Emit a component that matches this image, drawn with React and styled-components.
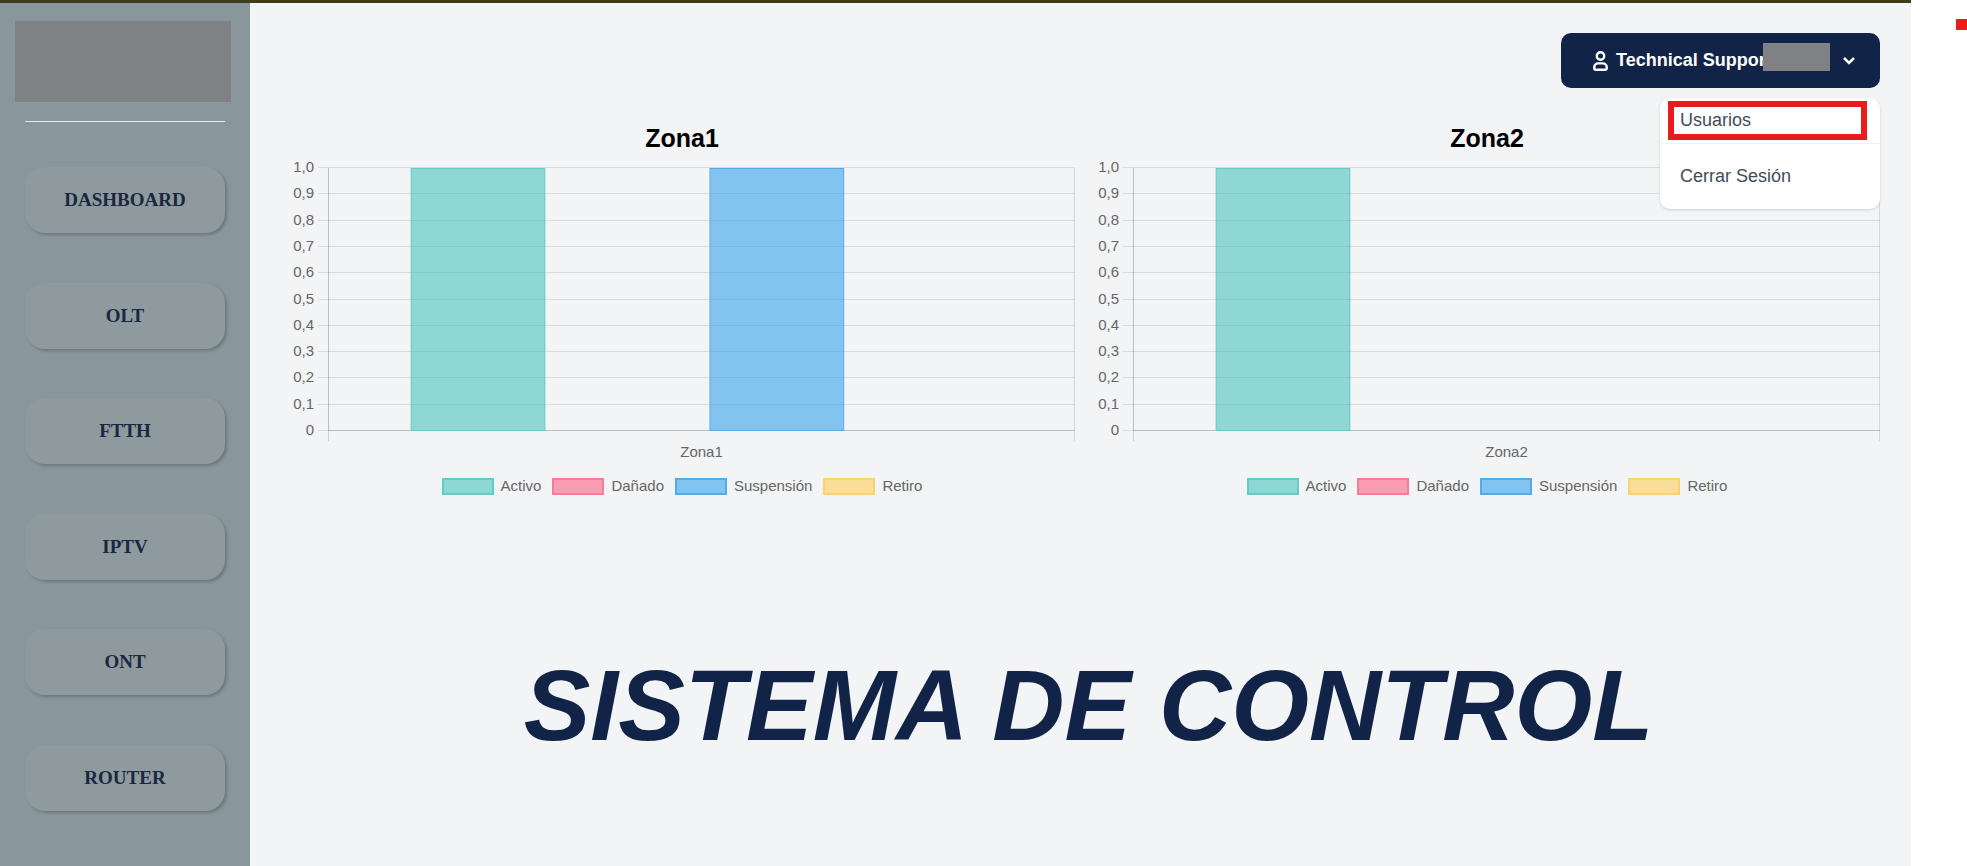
import React from "react";
import styled, { createGlobalStyle } from "styled-components";

const GlobalStyle = createGlobalStyle`
  *, *::before, *::after { box-sizing: border-box; }
  body {
    margin: 0;
    background: #ffffff;
    font-family: "Liberation Sans", Arial, Helvetica, sans-serif;
  }
`;

const Page = styled.div`
  display: grid;
  grid-template-columns: minmax(0, 1fr) 56px;
  min-height: 100vh;
`;

const Shell = styled.div`
  display: grid;
  grid-template-columns: 250px minmax(0, 1fr);
  border-top: 3px solid #423c1f;
  background: #f3f4f6;
`;

const Gutter = styled.aside`
  display: flex;
  justify-content: flex-end;
  align-items: flex-start;
  padding-top: 19px;
`;

const Marker = styled.span`
  width: 11px;
  height: 11px;
  background: #e81c1c;
`;

const Sidebar = styled.aside`
  display: flex;
  flex-direction: column;
  background: #89969b;
  padding: 18px 25px 55px;
`;

const LogoBlock = styled.div`
  height: 81px;
  margin: 0 -6px 0 -10px;
  background: #808184;
`;

const Divider = styled.hr`
  width: 100%;
  height: 1px;
  margin: 19px 0 45px;
  border: 0;
  background: #e5e7eb;
`;

const Menu = styled.nav`
  display: flex;
  flex: 1;
  flex-direction: column;
  justify-content: space-between;
  gap: 16px;
`;

const MenuLink = styled.a`
  display: flex;
  align-items: center;
  justify-content: center;
  height: 66px;
  border-radius: 20px;
  background: #8f9a9e;
  box-shadow: 2px 2px 3px rgba(0, 0, 0, 0.2);
  color: #1a2740;
  font: bold 19px/24px "Liberation Serif", "Times New Roman", serif;
  text-decoration: none;
`;

const Main = styled.main`
  display: flex;
  flex-direction: column;
  padding: 30px 31px 60px 39px;
`;

const Header = styled.header`
  display: flex;
  justify-content: flex-end;
`;

const UserMenu = styled.div`
  position: relative;
`;

const UserButton = styled.button`
  display: flex;
  align-items: center;
  width: 319px;
  height: 55px;
  padding: 0 25px 0 32px;
  border: 0;
  border-radius: 10px;
  background: #112347;
  color: #ffffff;
  font: bold 18px/24px "Liberation Sans", Arial, sans-serif;
`;

const UserName = styled.span`
  position: relative;
  flex: 1;
  margin: 0 13px 0 8px;
  padding-bottom: 2px;
  text-align: left;
`;

const NameMask = styled.span`
  position: absolute;
  top: -5px;
  right: 0;
  width: 67px;
  height: 28px;
  background: #808184;
`;

const Dropdown = styled.div`
  position: absolute;
  z-index: 1;
  top: 65px;
  right: 0;
  width: 220px;
  border-radius: 10px;
  background: #ffffff;
  box-shadow: 0 1px 3px rgba(0, 0, 0, 0.15);
`;

const DropdownItem = styled.a`
  display: flex;
  align-items: center;
  height: ${({ $tall }) => ($tall ? "66px" : "45px")};
  padding: 0 20px 2px;
  border-top: ${({ $tall }) => ($tall ? "1px solid #f0f1f3" : "0")};
  color: #414b5c;
  font-size: 18px;
  line-height: 24px;
  text-decoration: none;
`;

const Highlight = styled.span`
  position: absolute;
  top: 3px;
  left: 8px;
  right: 13px;
  height: 39px;
  border: 6px solid #e81c1c;
  pointer-events: none;
`;

const Charts = styled.section`
  display: grid;
  grid-template-columns: repeat(2, minmax(0, 1fr));
  gap: 19px;
  margin-top: 32px;
`;

const ChartCard = styled.figure`
  margin: 0;
`;

const ChartTitle = styled.h2`
  margin: 0;
  color: #000000;
  font-size: 25px;
  line-height: 36px;
  text-align: center;
`;

const ChartBody = styled.div`
  display: grid;
  grid-template-columns: 39px minmax(0, 1fr);
  padding-top: 11px;
`;

const AxisDrawing = styled.svg`
  display: block;
  width: 100%;
  height: 274px;
  overflow: visible;
`;

const TickLabel = styled.text`
  fill: #666666;
  font-size: 15px;
  text-anchor: end;
`;

const CategoryLabel = styled.div`
  grid-column: 2;
  color: #666666;
  font-size: 15px;
  line-height: 22px;
  text-align: center;
`;

const Legend = styled.ul`
  display: flex;
  justify-content: center;
  gap: 11px;
  margin: 13px 0 0;
  padding: 0;
  list-style: none;
`;

const LegendItem = styled.li`
  display: flex;
  align-items: center;
  gap: 7px;
  color: #666666;
  font-size: 15px;
  line-height: 20px;
`;

const Swatch = styled.span`
  width: 52px;
  height: 17px;
  border: 2px solid ${({ $line }) => $line};
  background: ${({ $fill }) => $fill};
`;

const SystemTitle = styled.h1`
  margin: 153px 0 0;
  padding-left: 8px;
  color: #112347;
  font-size: 100px;
  font-style: italic;
  font-weight: bold;
  line-height: 112px;
  text-align: center;
`;

const MENU = ["DASHBOARD", "OLT", "FTTH", "IPTV", "ONT", "ROUTER"];

const SERIES = [
  { name: "Activo", fill: "#8fd7d5", line: "#66cac8" },
  { name: "Dañado", fill: "#fb9db2", line: "#f97b97" },
  { name: "Suspensión", fill: "#82c3ef", line: "#52acea" },
  { name: "Retiro", fill: "#fade98", line: "#fbd270" },
];

const ZONES = [
  { name: "Zona1", values: [1, 0, 1, 0] },
  { name: "Zona2", values: [1, 0, 0, 0] },
];

const TICKS = ["1,0", "0,9", "0,8", "0,7", "0,6", "0,5", "0,4", "0,3", "0,2", "0,1", "0"];
const PLOT_HEIGHT = 263;

const tickY = (index) => Math.round((index * PLOT_HEIGHT) / 10) + 0.5;

function UserIcon() {
  return (
    <svg width="15" height="22" viewBox="0 0 15 22" fill="none" stroke="currentColor" strokeWidth="2.4" aria-hidden="true">
      <circle cx="7.500" cy="6" r="3.700" />
      <path d="M5 13.400h5a3.700 3.700 0 0 1 3.700 3.700v1.500a1.200 1.200 0 0 1-1.200 1.200h-10a1.200 1.200 0 0 1-1.200-1.200v-1.500A3.700 3.700 0 0 1 5 13.400z" />
    </svg>
  );
}

function ChevronIcon() {
  return (
    <svg width="12" height="8" viewBox="0 0 12 8" fill="none" stroke="currentColor" strokeWidth="2.5" aria-hidden="true">
      <path d="M1 1l5 5 5-5" />
    </svg>
  );
}

function ZoneChart({ zone }) {
  return (
    <ChartCard>
      <ChartTitle>{zone.name}</ChartTitle>
      <ChartBody>
        <AxisDrawing>
          {TICKS.map((label, i) => (
            <g key={label}>
              <TickLabel x="25" y={tickY(i) + 4.5}>{label}</TickLabel>
              <line x1="29" x2="39" y1={tickY(i)} y2={tickY(i)} stroke="#000" strokeOpacity="0.1" />
            </g>
          ))}
        </AxisDrawing>
        <AxisDrawing>
          {TICKS.map((label, i) => (
            <line
              key={label}
              x1="0"
              x2="100%"
              y1={tickY(i)}
              y2={tickY(i)}
              stroke="#000"
              strokeOpacity={i === 10 ? 0.22 : 0.1}
            />
          ))}
          <line x1="0.5" x2="0.5" y1="1" y2="264" stroke="#000" strokeOpacity="0.22" />
          <line x1="0.5" x2="0.5" y1="264" y2="274" stroke="#000" strokeOpacity="0.14" />
          <g transform="translate(-0.5 0)">
            <line x1="100%" x2="100%" y1="1" y2="274" stroke="#000" strokeOpacity="0.12" />
          </g>
          {zone.values.map((value, i) =>
            value > 0 ? (
              <g key={SERIES[i].name} transform="translate(1 0)">
                <rect
                  x={`${11 + i * 20}%`}
                  y={PLOT_HEIGHT * (1 - value) + 1.5}
                  width="17.9%"
                  height={PLOT_HEIGHT * value - 1}
                  fill={SERIES[i].fill}
                  stroke={SERIES[i].line}
                />
                {TICKS.slice(1, 10).map((label, t) => (
                  <line
                    key={label}
                    x1={`${11 + i * 20}%`}
                    x2={`${28.9 + i * 20}%`}
                    y1={tickY(t + 1)}
                    y2={tickY(t + 1)}
                    stroke="#000"
                    strokeOpacity="0.06"
                  />
                ))}
              </g>
            ) : null
          )}
        </AxisDrawing>
        <CategoryLabel>{zone.name}</CategoryLabel>
      </ChartBody>
      <Legend>
        {SERIES.map((series) => (
          <LegendItem key={series.name}>
            <Swatch $fill={series.fill} $line={series.line} />
            {series.name}
          </LegendItem>
        ))}
      </Legend>
    </ChartCard>
  );
}

export default function App() {
  return (
    <>
      <GlobalStyle />
      <Page>
        <Shell>
          <Sidebar>
            <LogoBlock />
            <Divider />
            <Menu>
              {MENU.map((item) => (
                <MenuLink key={item} href="#">{item}</MenuLink>
              ))}
            </Menu>
          </Sidebar>
          <Main>
            <Header>
              <UserMenu>
                <UserButton type="button">
                  <UserIcon />
                  <UserName>
                    Technical Support
                    <NameMask />
                  </UserName>
                  <ChevronIcon />
                </UserButton>
                <Dropdown>
                  <DropdownItem href="#">Usuarios</DropdownItem>
                  <DropdownItem href="#" $tall>Cerrar Sesión</DropdownItem>
                  <Highlight />
                </Dropdown>
              </UserMenu>
            </Header>
            <Charts>
              {ZONES.map((zone) => (
                <ZoneChart key={zone.name} zone={zone} />
              ))}
            </Charts>
            <SystemTitle>SISTEMA DE CONTROL</SystemTitle>
          </Main>
        </Shell>
        <Gutter>
          <Marker />
        </Gutter>
      </Page>
    </>
  );
}
